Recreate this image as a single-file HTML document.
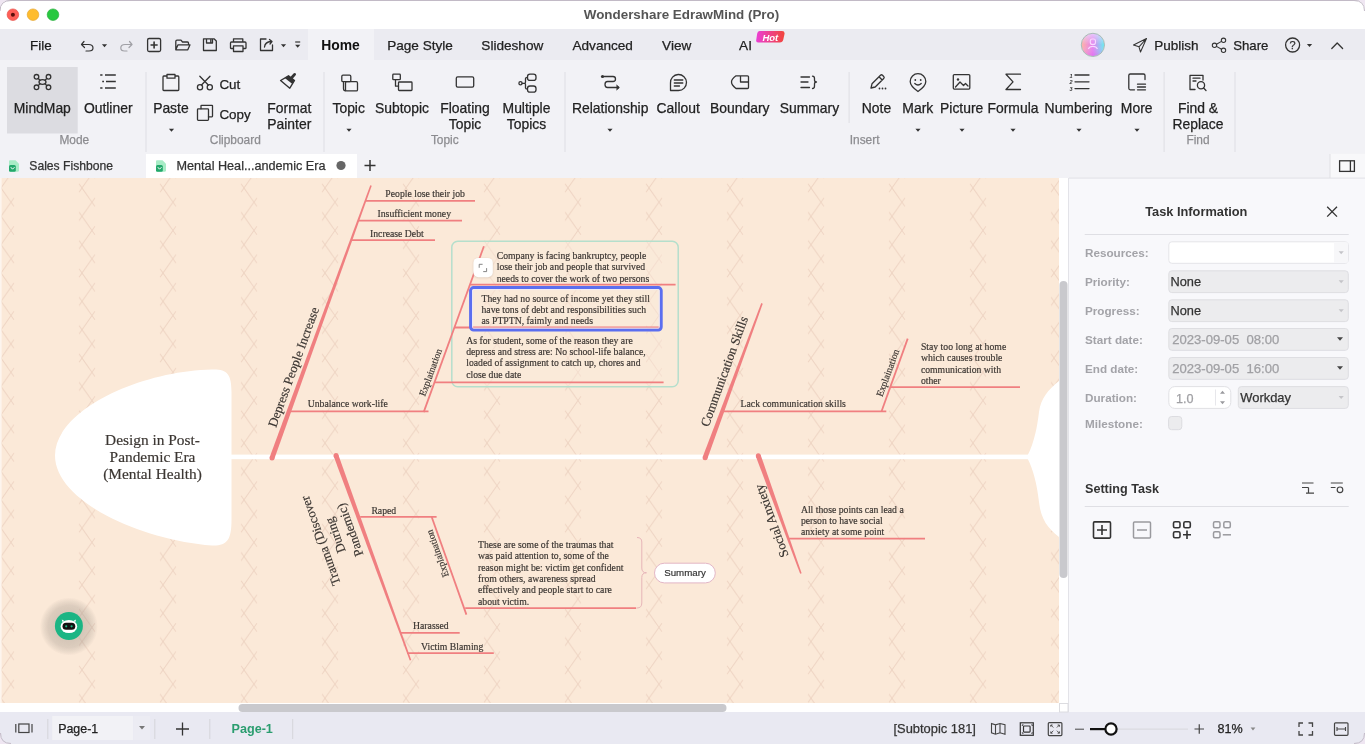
<!DOCTYPE html>
<html><head><meta charset="utf-8">
<style>
html,body{margin:0;padding:0;width:1365px;height:744px;overflow:hidden;background:#fff;}
body{position:relative;font-family:"Liberation Sans",sans-serif;}
.abs{position:absolute;}
svg{position:absolute;left:0;top:0;will-change:transform;}
</style></head><body>

<div class="abs" style="left:0;top:0;width:1365px;height:29px;background:#fff;"></div>
<div class="abs" style="left:0;top:0;width:1365px;height:1px;background:#cfcad3;"></div>
<div class="abs" style="left:0;top:29px;width:1365px;height:31px;background:#ebebf1;"></div>
<div class="abs" style="left:308px;top:29px;width:66px;height:31px;background:#f2f2f6;"></div>
<div class="abs" style="left:0;top:60px;width:1365px;height:93px;background:#f2f2f6;"></div>
<div class="abs" style="left:0;top:153px;width:1365px;height:25px;background:#f2f2f6;"></div>
<div class="abs" style="left:146px;top:154px;width:211px;height:24px;background:#fff;"></div>
<div class="abs" style="left:0;top:178px;width:1059px;height:525px;background:#fbe9d8;"></div>
<div class="abs" style="left:0;top:703px;width:1069px;height:9px;background:#fff;"></div>
<div class="abs" style="left:1059px;top:178px;width:9px;height:525px;background:#fff;"></div>
<div class="abs" style="left:1068px;top:178px;width:1px;height:534px;background:#e3e3e8;"></div>
<div class="abs" style="left:1069px;top:178px;width:296px;height:534px;background:#f8f8fb;"></div>
<div class="abs" style="left:0;top:712px;width:1365px;height:32px;background:#e9e9f2;"></div>

<svg width="1365" height="744" viewBox="0 0 1365 744" style="clip-path:inset(178px 306px 41px 0px)">
<defs><pattern id="pat" patternUnits="userSpaceOnUse" x="-4" y="188" width="81" height="28.35">
<g stroke="#eed4c3" stroke-width="1" fill="none">
<line x1="2.1" y1="-4.1" x2="17.9" y2="18.3"/>
<line x1="17.9" y1="10.0" x2="2.1" y2="32.4"/>
<line x1="17.9" y1="-18.3" x2="2.1" y2="4.1"/>
<line x1="2.1" y1="24.2" x2="17.9" y2="46.6"/>
</g></pattern></defs>
<rect x="0" y="178" width="1059" height="525" fill="url(#pat)"/><rect x="0" y="178" width="1.6" height="525" fill="#fdf5ee"/>
<rect x="451.8" y="241.2" width="226.4" height="145.5" rx="6" fill="#faebdc" fill-opacity="0.4" stroke="#b5dfcc" stroke-width="1.5"/>
<rect x="231" y="454.6" width="798" height="4.6" fill="#fff"/>
<path d="M231.5,392 C231.5,374 227,369 212,369.5 C140,371 55,410 55,455.5 C55,501 140,540 212,545.5 C227,546 231.5,540 231.5,520 Z" fill="#fff"/>
<text x="152.5" y="444.9" font-family="Liberation Serif" font-size="15.39" fill="#3b3632" stroke="#3b3632" stroke-width="0.18" text-anchor="middle" >Design in Post-</text><text x="152.5" y="461.95" font-family="Liberation Serif" font-size="15.39" fill="#3b3632" stroke="#3b3632" stroke-width="0.18" text-anchor="middle" >Pandemic Era</text><text x="152.5" y="479.0" font-family="Liberation Serif" font-size="15.39" fill="#3b3632" stroke="#3b3632" stroke-width="0.18" text-anchor="middle" >(Mental Health)</text>
<path d="M1027.8,455 C1033,445 1037,430 1039,412 C1041,398 1048,390 1059,381 L1059,703 L1059,537 C1048,528 1041,520 1039,502 C1037,484 1033,469 1027.8,459 Z" fill="#fff"/>
<path d="M274.35,458.85 L371.75,185.77 L370.25,185.23 L269.65,457.15 Z" fill="#f07f80"/><circle cx="272" cy="458" r="2.5" fill="#f07f80"/>
<g transform="translate(293.4,367) rotate(-70)"><text x="0" y="4.41" font-family="Liberation Serif" font-size="12.96" fill="#3b3632" stroke="#3b3632" stroke-width="0.18" text-anchor="middle">Depress People Increase</text></g>
<line x1="365.44076" y1="200.8" x2="475" y2="200.8" stroke="#f07f80" stroke-width="1.8"/>
<text x="385.3" y="197.4" font-family="Liberation Serif" font-size="9.72" fill="#3b3632" stroke="#3b3632" stroke-width="0.18" text-anchor="start" >People lose their job</text>
<line x1="358.21109" y1="220.7" x2="462" y2="220.7" stroke="#f07f80" stroke-width="1.8"/>
<text x="377.5" y="217.29999999999998" font-family="Liberation Serif" font-size="9.72" fill="#3b3632" stroke="#3b3632" stroke-width="0.18" text-anchor="start" >Insufficient money</text>
<line x1="351.12674000000004" y1="240.2" x2="435" y2="240.2" stroke="#f07f80" stroke-width="1.8"/>
<text x="370" y="236.79999999999998" font-family="Liberation Serif" font-size="9.72" fill="#3b3632" stroke="#3b3632" stroke-width="0.18" text-anchor="start" >Increase Debt</text>
<line x1="289" y1="411.3" x2="428.5" y2="411.3" stroke="#f07f80" stroke-width="1.8"/>
<text x="307.7" y="406.8" font-family="Liberation Serif" font-size="9.72" fill="#3b3632" stroke="#3b3632" stroke-width="0.18" text-anchor="start" >Unbalance work-life</text>
<line x1="423.7" y1="412.1" x2="483.9" y2="246.2" stroke="#f07f80" stroke-width="1.8"/>
<g transform="translate(430.5,372.4) rotate(-70)"><text x="0" y="3.30" font-family="Liberation Serif" font-size="9.72" fill="#3b3632" stroke="#3b3632" stroke-width="0.18" text-anchor="middle">Explaination</text></g>
<line x1="469.93346" y1="284.7" x2="675.6" y2="284.7" stroke="#f07f80" stroke-width="1.8"/>
<line x1="454.40134" y1="327.5" x2="662" y2="327.5" stroke="#f07f80" stroke-width="1.8"/>
<line x1="434.51442" y1="382.3" x2="663.6" y2="382.3" stroke="#f07f80" stroke-width="1.8"/>
<text x="496.7" y="259.0" font-family="Liberation Serif" font-size="9.72" fill="#3b3632" stroke="#3b3632" stroke-width="0.18" text-anchor="start" >Company is facing bankruptcy, people</text><text x="496.7" y="270.42" font-family="Liberation Serif" font-size="9.72" fill="#3b3632" stroke="#3b3632" stroke-width="0.18" text-anchor="start" >lose their job and people that survived</text><text x="496.7" y="281.84" font-family="Liberation Serif" font-size="9.72" fill="#3b3632" stroke="#3b3632" stroke-width="0.18" text-anchor="start" >needs to cover the work of two persons</text>
<text x="481.5" y="301.6" font-family="Liberation Serif" font-size="9.72" fill="#3b3632" stroke="#3b3632" stroke-width="0.18" text-anchor="start" >They had no source of income yet they still</text><text x="481.5" y="313.02000000000004" font-family="Liberation Serif" font-size="9.72" fill="#3b3632" stroke="#3b3632" stroke-width="0.18" text-anchor="start" >have tons of debt and responsibilities such</text><text x="481.5" y="324.44" font-family="Liberation Serif" font-size="9.72" fill="#3b3632" stroke="#3b3632" stroke-width="0.18" text-anchor="start" >as PTPTN, faimly and needs</text>
<text x="466.2" y="343.5" font-family="Liberation Serif" font-size="9.72" fill="#3b3632" stroke="#3b3632" stroke-width="0.18" text-anchor="start" >As for student, some of the reason they are</text><text x="466.2" y="354.92" font-family="Liberation Serif" font-size="9.72" fill="#3b3632" stroke="#3b3632" stroke-width="0.18" text-anchor="start" >depress and stress are: No school-life balance,</text><text x="466.2" y="366.34" font-family="Liberation Serif" font-size="9.72" fill="#3b3632" stroke="#3b3632" stroke-width="0.18" text-anchor="start" >loaded of assignment to catch up, chores and</text><text x="466.2" y="377.76" font-family="Liberation Serif" font-size="9.72" fill="#3b3632" stroke="#3b3632" stroke-width="0.18" text-anchor="start" >close due date</text>
<rect x="470.6" y="287.6" width="190.6" height="42.5" rx="3" fill="none" stroke="#5b6ef0" stroke-width="3"/><rect x="472.6" y="289.6" width="186.6" height="38.5" rx="1" fill="none" stroke="#eeeaf8" stroke-width="0.9"/>
<defs><filter id="bs" x="-50%" y="-50%" width="200%" height="200%"><feGaussianBlur stdDeviation="0.8"/></filter></defs><rect x="473.4" y="258.4" width="19.4" height="19.4" rx="5" fill="#b0a090" opacity="0.45" filter="url(#bs)"/><rect x="473.4" y="257.9" width="19.4" height="19.4" rx="5" fill="#fff"/>
<path d="M479.2,267.8 V264.3 H482.6 M486.6,268.1 V271.6 H483.2" stroke="#777" stroke-width="0.9" fill="none"/>
<path d="M707.45,458.56 L762.75,303.68 L761.25,303.12 L702.75,456.84 Z" fill="#f07f80"/><circle cx="705.1" cy="457.7" r="2.5" fill="#f07f80"/>
<g transform="translate(724.2,371.4) rotate(-70)"><text x="0" y="4.41" font-family="Liberation Serif" font-size="12.96" fill="#3b3632" stroke="#3b3632" stroke-width="0.18" text-anchor="middle">Communication Skills</text></g>
<line x1="722.9" y1="411.4" x2="886.3" y2="411.4" stroke="#f07f80" stroke-width="1.8"/>
<text x="740.6" y="406.6" font-family="Liberation Serif" font-size="9.72" fill="#3b3632" stroke="#3b3632" stroke-width="0.18" text-anchor="start" >Lack communication skills</text>
<line x1="881.4" y1="411.8" x2="907.7" y2="338.6" stroke="#f07f80" stroke-width="1.8"/>
<g transform="translate(887.7,372.9) rotate(-70)"><text x="0" y="3.30" font-family="Liberation Serif" font-size="9.72" fill="#3b3632" stroke="#3b3632" stroke-width="0.18" text-anchor="middle">Explaination</text></g>
<line x1="890" y1="387.1" x2="1020" y2="387.1" stroke="#f07f80" stroke-width="1.8"/>
<text x="920.9" y="350.0" font-family="Liberation Serif" font-size="9.72" fill="#3b3632" stroke="#3b3632" stroke-width="0.18" text-anchor="start" >Stay too long at home</text><text x="920.9" y="361.42" font-family="Liberation Serif" font-size="9.72" fill="#3b3632" stroke="#3b3632" stroke-width="0.18" text-anchor="start" >which causes trouble</text><text x="920.9" y="372.84" font-family="Liberation Serif" font-size="9.72" fill="#3b3632" stroke="#3b3632" stroke-width="0.18" text-anchor="start" >communication with</text><text x="920.9" y="384.26" font-family="Liberation Serif" font-size="9.72" fill="#3b3632" stroke="#3b3632" stroke-width="0.18" text-anchor="start" >other</text>
<path d="M333.65,456.35 L409.75,660.57 L411.25,660.03 L338.35,454.65 Z" fill="#f07f80"/><circle cx="336" cy="455.5" r="2.5" fill="#f07f80"/>
<g transform="translate(335.2,535.3) rotate(-110)"><text x="0" y="-11.29" font-family="Liberation Serif" font-size="12.96" fill="#3b3632" stroke="#3b3632" stroke-width="0.18" text-anchor="middle">Trauma (Discover</text><text x="0" y="4.41" font-family="Liberation Serif" font-size="12.96" fill="#3b3632" stroke="#3b3632" stroke-width="0.18" text-anchor="middle">During</text><text x="0" y="20.11" font-family="Liberation Serif" font-size="12.96" fill="#3b3632" stroke="#3b3632" stroke-width="0.18" text-anchor="middle">Pandemic)</text></g>
<line x1="360.2" y1="516.8" x2="436.6" y2="516.8" stroke="#f07f80" stroke-width="1.8"/>
<text x="371.4" y="513.7" font-family="Liberation Serif" font-size="9.72" fill="#3b3632" stroke="#3b3632" stroke-width="0.18" text-anchor="start" >Raped</text>
<line x1="431.7" y1="517" x2="466.4" y2="614.6" stroke="#f07f80" stroke-width="1.8"/>
<g transform="translate(437.4,553.6) rotate(-110)"><text x="0" y="3.30" font-family="Liberation Serif" font-size="9.72" fill="#3b3632" stroke="#3b3632" stroke-width="0.18" text-anchor="middle">Explaination</text></g>
<line x1="465.2" y1="608.1" x2="636.2" y2="608.1" stroke="#f07f80" stroke-width="1.8"/>
<text x="478" y="547.7" font-family="Liberation Serif" font-size="9.72" fill="#3b3632" stroke="#3b3632" stroke-width="0.18" text-anchor="start" >These are some of the traumas that</text><text x="478" y="559.12" font-family="Liberation Serif" font-size="9.72" fill="#3b3632" stroke="#3b3632" stroke-width="0.18" text-anchor="start" >was paid attention to, some of the</text><text x="478" y="570.5400000000001" font-family="Liberation Serif" font-size="9.72" fill="#3b3632" stroke="#3b3632" stroke-width="0.18" text-anchor="start" >reason might be: victim get confident</text><text x="478" y="581.96" font-family="Liberation Serif" font-size="9.72" fill="#3b3632" stroke="#3b3632" stroke-width="0.18" text-anchor="start" >from others, awareness spread</text><text x="478" y="593.38" font-family="Liberation Serif" font-size="9.72" fill="#3b3632" stroke="#3b3632" stroke-width="0.18" text-anchor="start" >effectively and people start to care</text><text x="478" y="604.8000000000001" font-family="Liberation Serif" font-size="9.72" fill="#3b3632" stroke="#3b3632" stroke-width="0.18" text-anchor="start" >about victim.</text>
<path d="M637,537.5 Q641.8,537.5 641.8,542 L641.8,568 Q641.8,572.8 646.5,572.8 Q641.8,572.8 641.8,577.5 L641.8,603 Q641.8,608 637,608" fill="none" stroke="#e6b4b8" stroke-width="1"/>
<rect x="654.5" y="563.2" width="60.8" height="19.7" rx="9.8" fill="#fff" stroke="#e2b6c6" stroke-width="1"/>
<text x="685" y="575.7" font-family="Liberation Sans" font-size="9.72" fill="#333" stroke="#333" stroke-width="0.18" text-anchor="middle" >Summary</text>
<line x1="400.6" y1="632.8" x2="459.7" y2="632.8" stroke="#f07f80" stroke-width="1.8"/>
<text x="413" y="629.3" font-family="Liberation Serif" font-size="9.72" fill="#3b3632" stroke="#3b3632" stroke-width="0.18" text-anchor="start" >Harassed</text>
<line x1="407" y1="653.2" x2="493.8" y2="653.2" stroke="#f07f80" stroke-width="1.8"/>
<text x="421" y="649.7" font-family="Liberation Serif" font-size="9.72" fill="#3b3632" stroke="#3b3632" stroke-width="0.18" text-anchor="start" >Victim Blaming</text>
<path d="M755.95,456.65 L800.15,573.87 L801.65,573.33 L760.65,454.95 Z" fill="#f07f80"/><circle cx="758.3" cy="455.8" r="2.5" fill="#f07f80"/>
<g transform="translate(771.5,520.9) rotate(-110)"><text x="0" y="4.41" font-family="Liberation Serif" font-size="12.96" fill="#3b3632" stroke="#3b3632" stroke-width="0.18" text-anchor="middle">Social Anxiety</text></g>
<line x1="788.4" y1="538.6" x2="925" y2="538.6" stroke="#f07f80" stroke-width="1.8"/>
<text x="800.9" y="512.6" font-family="Liberation Serif" font-size="9.72" fill="#3b3632" stroke="#3b3632" stroke-width="0.18" text-anchor="start" >All those points can lead a</text><text x="800.9" y="524.02" font-family="Liberation Serif" font-size="9.72" fill="#3b3632" stroke="#3b3632" stroke-width="0.18" text-anchor="start" >person to have social</text><text x="800.9" y="535.44" font-family="Liberation Serif" font-size="9.72" fill="#3b3632" stroke="#3b3632" stroke-width="0.18" text-anchor="start" >anxiety at some point</text>
<defs><radialGradient id="sh"><stop offset="0.4" stop-color="#948a80" stop-opacity="0.38"/><stop offset="0.72" stop-color="#948a80" stop-opacity="0.3"/><stop offset="0.9" stop-color="#948a80" stop-opacity="0.12"/><stop offset="1" stop-color="#948a80" stop-opacity="0"/></radialGradient></defs>
<circle cx="68.9" cy="626.5" r="29" fill="url(#sh)"/>
<circle cx="68.9" cy="626" r="14" fill="#1bb584"/>
<path d="M62.5,622 L61.8,619.5 L64.5,621 Z M75.3,622 L76,619.5 L73.3,621 Z" fill="#fff"/><ellipse cx="68.9" cy="626.5" rx="8.3" ry="6.6" fill="#fff"/>
<rect x="62.5" y="622.8" width="12.8" height="7" rx="3.5" fill="#111"/>
<circle cx="66.2" cy="626.3" r="1.1" fill="#1bb584"/><circle cx="71.6" cy="626.3" r="1.1" fill="#1bb584"/>
</svg>
<svg width="1365" height="744" viewBox="0 0 1365 744">
<rect x="1059.5" y="281" width="8" height="297" rx="4" fill="#c9c9cd"/>
<rect x="238.5" y="704" width="488" height="8" rx="4" fill="#c9c9cd"/>
<rect x="1059.5" y="703.5" width="8.5" height="8.5" fill="#fff" stroke="#dcdce0" stroke-width="1"/>
<path d="M0,0 H11 Q0,0 0,11 Z M1365,0 H1354 Q1365,0 1365,11 Z M0,744 V733 Q0,744 11,744 Z M1365,744 V733 Q1365,744 1354,744 Z" fill="#efe6f2"/>
<path d="M0,11 Q0,0.5 11,0.5 H1354 Q1364.5,0.5 1364.5,11 M0.5,733 Q0.5,743.5 11,743.5 M1354,743.5 Q1364.5,743.5 1364.5,733" fill="none" stroke="#c2bac6" stroke-width="1"/>
<circle cx="12.9" cy="14.7" r="5.8" fill="#fe5f57" stroke="#e2463f" stroke-width="0.6"/><circle cx="12.9" cy="14.7" r="2" fill="#5a0f0a"/>
<circle cx="33" cy="14.7" r="5.8" fill="#febc2e" stroke="#e0a028" stroke-width="0.6"/>
<circle cx="53" cy="14.7" r="5.8" fill="#28c840" stroke="#1fa834" stroke-width="0.6"/>
<text x="681.5" y="18.6" font-family="Liberation Sans" font-size="13.4" fill="#555" text-anchor="middle" font-weight="700" >Wondershare EdrawMind (Pro)</text>
<text x="30" y="49.8" font-family="Liberation Sans" font-size="13.4" fill="#1a1a1a" stroke="#1a1a1a" stroke-width="0.25" text-anchor="start" font-weight="400" >File</text>
<path d="M84,41.5 L81.5,44.5 L84.5,47.5 M81.8,44.5 H88.5 Q93,44.5 93,48 Q93,51 89,51 H86" fill="none" stroke="#333" stroke-width="1.2" stroke-linecap="round" stroke-linejoin="round"/>
<path d="M101.9,44.239999999999995 L107.1,44.239999999999995 L104.5,47.36 Z" fill="#333"/>
<path d="M129.5,41.5 L132,44.5 L129,47.5 M131.7,44.5 H125 Q120.8,44.5 120.8,48 Q120.8,51 124.5,51 H127" fill="none" stroke="#a0a0a6" stroke-width="1.2" stroke-linecap="round" stroke-linejoin="round"/>
<rect x="147.6" y="38.5" width="13" height="13" rx="1.5" fill="none" stroke="#333" stroke-width="1.3" stroke-linecap="round" stroke-linejoin="round"/><path d="M154.1,42 V48 M151.1,45 H157.1" fill="none" stroke="#333" stroke-width="1.6" stroke-linecap="round"/>
<path d="M175.8,49.8 V41.5 Q175.8,40.2 177,40.2 H181 L182.5,42 H187.5 Q188.5,42 188.5,43 V44.2 M175.8,49.8 L178,44.8 H190 L187.8,49.8 Z" fill="none" stroke="#333" stroke-width="1.3" stroke-linecap="round" stroke-linejoin="round"/>
<path d="M203.5,38.8 H214 L216.3,41 V50.5 H203.5 Z M206.5,38.8 V43 H212.5 V38.8 M210.8,40 V42" fill="none" stroke="#333" stroke-width="1.3" stroke-linecap="round" stroke-linejoin="round"/>
<path d="M233.5,42 V38.8 H242.8 V42 M233,48.5 H231 Q230.5,48.5 230.5,48 V43 Q230.5,42 231.5,42 H245 Q246,42 246,43 V48 Q246,48.5 245.5,48.5 H243.5 M233.5,45.8 H243 V51.5 H233.5 Z" fill="none" stroke="#333" stroke-width="1.3" stroke-linecap="round" stroke-linejoin="round"/>
<path d="M266,39 H260.5 V50.5 H272.5 V45 M264.5,47 Q265,42 271,41.5 M269.5,39.5 L272,41.5 L270,44" fill="none" stroke="#333" stroke-width="1.3" stroke-linecap="round" stroke-linejoin="round"/>
<path d="M280.9,44.239999999999995 L286.1,44.239999999999995 L283.5,47.36 Z" fill="#333"/>
<path d="M295.2,42 H300.2" stroke="#333" stroke-width="1.2"/><path d="M295.09999999999997,44.64 L300.3,44.64 L297.7,47.760000000000005 Z" fill="#333"/>
<text x="340.5" y="49.8" font-family="Liberation Sans" font-size="13.9" fill="#111" text-anchor="middle" font-weight="700" >Home</text>
<text x="420" y="49.8" font-family="Liberation Sans" font-size="13.6" fill="#222" stroke="#222" stroke-width="0.25" text-anchor="middle" font-weight="400" >Page Style</text>
<text x="512.3" y="49.8" font-family="Liberation Sans" font-size="13.6" fill="#222" stroke="#222" stroke-width="0.25" text-anchor="middle" font-weight="400" >Slideshow</text>
<text x="602.7" y="49.8" font-family="Liberation Sans" font-size="13.6" fill="#222" stroke="#222" stroke-width="0.25" text-anchor="middle" font-weight="400" >Advanced</text>
<text x="676.7" y="49.8" font-family="Liberation Sans" font-size="13.6" fill="#222" stroke="#222" stroke-width="0.25" text-anchor="middle" font-weight="400" >View</text>
<text x="745.5" y="49.8" font-family="Liberation Sans" font-size="13.6" fill="#222" stroke="#222" stroke-width="0.25" text-anchor="middle" font-weight="400" >AI</text>
<defs><linearGradient id="hot" x1="0" x2="1"><stop offset="0" stop-color="#ea3fd6"/><stop offset="1" stop-color="#f2453a"/></linearGradient></defs>
<path d="M759.5,31 H782 Q785,31 784.5,34 L783.3,39.5 Q782.7,42.4 779.7,42.4 H758 Q755.8,42.4 756.2,40 L757.2,33.5 Q757.6,31 759.5,31 Z" fill="url(#hot)"/>
<text x="770.3" y="40.5" font-family="Liberation Sans" font-size="9.5" fill="#fff" text-anchor="middle" font-weight="700" font-style="italic">Hot</text>
<defs><linearGradient id="av" x1="0" y1="0" x2="1" y2="0"><stop offset="0" stop-color="#ffb2a6"/><stop offset="0.5" stop-color="#e47ef0"/><stop offset="1" stop-color="#66eef2"/></linearGradient><linearGradient id="av2" x1="0" y1="0" x2="0" y2="1"><stop offset="0" stop-color="#e8dcff" stop-opacity="0.75"/><stop offset="0.5" stop-color="#e8dcff" stop-opacity="0"/><stop offset="1" stop-color="#e050f0" stop-opacity="0.35"/></linearGradient></defs>
<circle cx="1092.9" cy="44.9" r="11.2" fill="url(#av)"/><circle cx="1092.9" cy="44.9" r="11.2" fill="url(#av2)"/><circle cx="1092.9" cy="44.9" r="11.6" fill="none" stroke="#9fb5b0" stroke-width="0.9"/>
<rect x="1090.3" y="39" width="5.2" height="5.4" rx="2" fill="none" stroke="#f8d8ff" stroke-width="1.1"/><path d="M1088.3,49 Q1089.5,46.4 1092.9,46.4 Q1096.3,46.4 1097.5,49" fill="none" stroke="#f8d8ff" stroke-width="1.1"/>
<path d="M1146.5,38.5 L1133.5,45 L1139,46.8 L1140.5,52 Z M1139,46.8 L1146.5,38.5" fill="none" stroke="#333" stroke-width="1.05" stroke-linejoin="round"/>
<text x="1154.3" y="50.3" font-family="Liberation Sans" font-size="13.5" fill="#222" stroke="#222" stroke-width="0.25" text-anchor="start" font-weight="400" >Publish</text>
<g fill="none" stroke="#333" stroke-width="1.05"><circle cx="1223.5" cy="40.3" r="2.2"/><circle cx="1214.5" cy="45.3" r="2.2"/><circle cx="1223.5" cy="50.3" r="2.2"/><path d="M1216.5,44.2 L1221.5,41.4 M1216.5,46.4 L1221.5,49.2"/></g>
<text x="1233.2" y="50.3" font-family="Liberation Sans" font-size="13.2" fill="#222" stroke="#222" stroke-width="0.25" text-anchor="start" font-weight="400" >Share</text>
<circle cx="1292.6" cy="45" r="7" fill="none" stroke="#333" stroke-width="1.3" stroke-linecap="round" stroke-linejoin="round"/>
<text x="1292.6" y="49.2" font-family="Liberation Sans" font-size="11" fill="#333" stroke="#333" stroke-width="0.25" text-anchor="middle" font-weight="400" >?</text>
<path d="M1306.9,43.94 L1312.1,43.94 L1309.5,47.06 Z" fill="#333"/>
<path d="M1331.8,48.5 L1337.2,43 L1342.6,48.5" fill="none" stroke="#333" stroke-width="1.3" stroke-linecap="round" stroke-linejoin="round"/>
<rect x="7" y="67" width="70.7" height="66.5" fill="#dcdce1"/>
<g fill="none" stroke="#333" stroke-width="1.3" stroke-linecap="round" stroke-linejoin="round"><ellipse cx="42.5" cy="82" rx="3.5" ry="2.3"/><circle cx="36.5" cy="76.8" r="2.3"/><circle cx="48.5" cy="76.8" r="2.3"/><circle cx="36.5" cy="87.3" r="2.3"/><circle cx="48.5" cy="87.3" r="2.3"/><path d="M38.2,78.5 L40,80.2 M46.8,78.5 L45,80.2 M38.2,85.6 L40,83.8 M46.8,85.6 L45,83.8"/></g>
<text x="42.3" y="113" font-family="Liberation Sans" font-size="13.9" fill="#222" stroke="#222" stroke-width="0.25" text-anchor="middle" font-weight="400" >MindMap</text>
<g stroke="#333" stroke-width="1.3"><path d="M100.2,75 H102.5 M105,75 H115.8 M102.2,81.5 H104 M106,81.5 H115.8 M100.2,88 H102.5 M105,88 H115.8"/></g>
<text x="108.2" y="113" font-family="Liberation Sans" font-size="13.9" fill="#222" stroke="#222" stroke-width="0.25" text-anchor="middle" font-weight="400" >Outliner</text>
<text x="74.3" y="143.6" font-family="Liberation Sans" font-size="11.9" fill="#8c8c90" stroke="#8c8c90" stroke-width="0.25" text-anchor="middle" font-weight="400" >Mode</text>
<rect x="145.5" y="72" width="1" height="80" fill="#dedee3"/>
<path d="M166.5,76 H163.8 Q163,76 163,77 V89.8 Q163,90.5 163.8,90.5 H178 Q178.8,90.5 178.8,89.8 V77 Q178.8,76 178,76 H175.5 M167,74.5 H175 V78.2 H167 Z" fill="none" stroke="#333" stroke-width="1.3" stroke-linecap="round" stroke-linejoin="round"/>
<text x="170.9" y="113" font-family="Liberation Sans" font-size="13.9" fill="#222" stroke="#222" stroke-width="0.25" text-anchor="middle" font-weight="400" >Paste</text>
<path d="M168.9,128.74 L174.1,128.74 L171.5,131.86 Z" fill="#333"/>
<circle cx="200" cy="87.2" r="2.6" fill="none" stroke="#333" stroke-width="1.3" stroke-linecap="round" stroke-linejoin="round"/><circle cx="209.8" cy="87.2" r="2.6" fill="none" stroke="#333" stroke-width="1.3" stroke-linecap="round" stroke-linejoin="round"/><path d="M201.5,85 L210,76.2 M208.3,85 L199.8,76.2" fill="none" stroke="#333" stroke-width="1.3" stroke-linecap="round" stroke-linejoin="round"/>
<text x="219.4" y="88.6" font-family="Liberation Sans" font-size="13.4" fill="#222" stroke="#222" stroke-width="0.25" text-anchor="start" font-weight="400" >Cut</text>
<rect x="197.5" y="108.8" width="11" height="11.5" rx="0.8" fill="none" stroke="#333" stroke-width="1.3" stroke-linecap="round" stroke-linejoin="round"/><path d="M201,108.8 V105.8 Q201,105.3 201.5,105.3 H212 Q212.5,105.3 212.5,105.8 V116 Q212.5,116.8 212,116.8 H208.5" fill="none" stroke="#333" stroke-width="1.3" stroke-linecap="round" stroke-linejoin="round"/>
<text x="219.4" y="118.6" font-family="Liberation Sans" font-size="13.4" fill="#222" stroke="#222" stroke-width="0.25" text-anchor="start" font-weight="400" >Copy</text>
<path d="M280.6,80.5 L288.5,75.8 L294.5,80.5 L289.8,88.2 Z" fill="none" stroke="#333" stroke-width="1.4" stroke-linejoin="round"/><path d="M284.8,78 L288.5,75.8 L294.5,80.5 L292.4,84 Z" fill="#333"/><path d="M291.2,78.2 L294.6,74.4" stroke="#333" stroke-width="2.8" stroke-linecap="round"/>
<text x="289.3" y="113" font-family="Liberation Sans" font-size="13.9" fill="#222" stroke="#222" stroke-width="0.25" text-anchor="middle" font-weight="400" >Format</text>
<text x="289.3" y="128.9" font-family="Liberation Sans" font-size="13.9" fill="#222" stroke="#222" stroke-width="0.25" text-anchor="middle" font-weight="400" >Painter</text>
<text x="235.3" y="143.6" font-family="Liberation Sans" font-size="11.9" fill="#8c8c90" stroke="#8c8c90" stroke-width="0.25" text-anchor="middle" font-weight="400" >Clipboard</text>
<rect x="323.5" y="72" width="1" height="80" fill="#dedee3"/>
<rect x="341.8" y="75.2" width="9" height="6.5" rx="1.2" fill="none" stroke="#333" stroke-width="1.3" stroke-linecap="round" stroke-linejoin="round"/><path d="M343.5,81.7 V88.5 Q343.5,90.8 345.5,90.8" fill="none" stroke="#333" stroke-width="1.3" stroke-linecap="round" stroke-linejoin="round"/><rect x="345.5" y="81.7" width="12" height="9.2" rx="1.2" fill="none" stroke="#333" stroke-width="1.3" stroke-linecap="round" stroke-linejoin="round"/>
<text x="348.7" y="113" font-family="Liberation Sans" font-size="13.9" fill="#222" stroke="#222" stroke-width="0.25" text-anchor="middle" font-weight="400" >Topic</text>
<path d="M346.4,128.74 L351.6,128.74 L349,131.86 Z" fill="#333"/>
<rect x="392.8" y="74.2" width="7.5" height="5.5" rx="0.8" fill="none" stroke="#333" stroke-width="1.3" stroke-linecap="round" stroke-linejoin="round"/><path d="M395.5,79.7 V86.2 H398.5" fill="none" stroke="#333" stroke-width="1.3" stroke-linecap="round" stroke-linejoin="round"/><rect x="398.5" y="82" width="13.5" height="8.5" rx="0.8" fill="none" stroke="#333" stroke-width="1.3" stroke-linecap="round" stroke-linejoin="round"/>
<text x="402" y="113" font-family="Liberation Sans" font-size="13.9" fill="#222" stroke="#222" stroke-width="0.25" text-anchor="middle" font-weight="400" >Subtopic</text>
<rect x="456.3" y="76.8" width="17.4" height="10.3" rx="1.4" fill="none" stroke="#333" stroke-width="1.3" stroke-linecap="round" stroke-linejoin="round"/>
<text x="465" y="113" font-family="Liberation Sans" font-size="13.9" fill="#222" stroke="#222" stroke-width="0.25" text-anchor="middle" font-weight="400" >Floating</text>
<text x="465" y="128.9" font-family="Liberation Sans" font-size="13.9" fill="#222" stroke="#222" stroke-width="0.25" text-anchor="middle" font-weight="400" >Topic</text>
<rect x="527.5" y="74.2" width="8.5" height="6.2" rx="2.5" fill="none" stroke="#333" stroke-width="1.3" stroke-linecap="round" stroke-linejoin="round"/><rect x="527.5" y="86" width="8.5" height="6.2" rx="2.5" fill="none" stroke="#333" stroke-width="1.3" stroke-linecap="round" stroke-linejoin="round"/><circle cx="520.5" cy="83.3" r="1.6" fill="none" stroke="#333" stroke-width="1.3" stroke-linecap="round" stroke-linejoin="round"/><path d="M522.1,83.3 H524.5 Q525.5,83.3 525.5,82 V78.5 Q525.5,77.3 527.5,77.3 M524.5,83.3 Q525.5,83.3 525.5,84.5 V88 Q525.5,89.1 527.5,89.1" fill="none" stroke="#333" stroke-width="1.3" stroke-linecap="round" stroke-linejoin="round"/>
<text x="526.5" y="113" font-family="Liberation Sans" font-size="13.9" fill="#222" stroke="#222" stroke-width="0.25" text-anchor="middle" font-weight="400" >Multiple</text>
<text x="526.5" y="128.9" font-family="Liberation Sans" font-size="13.9" fill="#222" stroke="#222" stroke-width="0.25" text-anchor="middle" font-weight="400" >Topics</text>
<text x="444.8" y="143.6" font-family="Liberation Sans" font-size="11.9" fill="#8c8c90" stroke="#8c8c90" stroke-width="0.25" text-anchor="middle" font-weight="400" >Topic</text>
<rect x="564.5" y="72" width="1" height="80" fill="#dedee3"/>
<circle cx="602.5" cy="76.5" r="1.6" fill="#333"/><path d="M603.5,76.5 H613 Q615.5,76.5 615.5,79 Q615.5,81.5 613,81.5 H607.5 Q605,81.5 605,84.5 Q605,87.5 607.5,87.5 H618.5" fill="none" stroke="#333" stroke-width="1.3" stroke-linecap="round" stroke-linejoin="round"/><path d="M616.5,85 L619.3,87.5 L616.5,90" fill="#333" stroke="#333" stroke-width="1"/>
<text x="610.2" y="113" font-family="Liberation Sans" font-size="13.9" fill="#222" stroke="#222" stroke-width="0.25" text-anchor="middle" font-weight="400" >Relationship</text>
<path d="M607.4,128.74 L612.6,128.74 L610,131.86 Z" fill="#333"/>
<path d="M670.5,90.5 V83 A8,8 0 1 1 678.5,90.5 Z" fill="none" stroke="#333" stroke-width="1.3" stroke-linecap="round" stroke-linejoin="round"/><path d="M674.3,80 H682.8 M674.3,83 H682.8 M674.3,86 H679.5" fill="none" stroke="#333" stroke-width="1.3" stroke-linecap="round" stroke-linejoin="round"/>
<text x="678.2" y="113" font-family="Liberation Sans" font-size="13.9" fill="#222" stroke="#222" stroke-width="0.25" text-anchor="middle" font-weight="400" >Callout</text>
<path d="M736,75.8 H747.5 Q748.5,75.8 748.5,76.8 V87.5 Q748.5,88.5 747.5,88.5 H736 Q731.5,85 731.5,82 Q731.5,79 736,75.8 Z M740.5,75.8 V82 H748.5" fill="none" stroke="#333" stroke-width="1.3" stroke-linecap="round" stroke-linejoin="round"/>
<text x="739.8" y="113" font-family="Liberation Sans" font-size="13.9" fill="#222" stroke="#222" stroke-width="0.25" text-anchor="middle" font-weight="400" >Boundary</text>
<path d="M801,77 H809.5 M801,82 H808 M801,87.5 H809.5 M812.5,76.2 Q814.5,76.2 814.5,78.5 V80 Q814.5,82 816.5,82 Q814.5,82 814.5,84 V86 Q814.5,88.5 812.5,88.5" fill="none" stroke="#333" stroke-width="1.3" stroke-linecap="round" stroke-linejoin="round"/>
<text x="809.4" y="113" font-family="Liberation Sans" font-size="13.9" fill="#222" stroke="#222" stroke-width="0.25" text-anchor="middle" font-weight="400" >Summary</text>
<rect x="848.6" y="72" width="1" height="51" fill="#dedee3"/>
<g transform="translate(0,-1)">
<path d="M871,89 L872,84.8 L880.5,76.3 Q881.5,75.3 882.5,76.3 L883.7,77.5 Q884.7,78.5 883.7,79.5 L875.2,88 Z M879,77.8 L882.2,81" fill="none" stroke="#333" stroke-width="1.3" stroke-linecap="round" stroke-linejoin="round"/><circle cx="879.5" cy="89.5" r="0.9" fill="#333"/><circle cx="882.5" cy="89.5" r="0.9" fill="#333"/><circle cx="885.5" cy="89.5" r="0.9" fill="#333"/>
</g>
<text x="876.5" y="113" font-family="Liberation Sans" font-size="13.9" fill="#222" stroke="#222" stroke-width="0.25" text-anchor="middle" font-weight="400" >Note</text>
<path d="M918,91.5 Q910.2,86 910.2,81.5 A7.8,7.8 0 1 1 925.8,81.5 Q925.8,86 918,91.5 Z" fill="none" stroke="#333" stroke-width="1.3" stroke-linecap="round" stroke-linejoin="round"/><circle cx="915.3" cy="80" r="0.9" fill="#333"/><circle cx="920.7" cy="80" r="0.9" fill="#333"/><path d="M914.8,83.5 Q918,86.5 921.2,83.5" fill="none" stroke="#333" stroke-width="1.3" stroke-linecap="round" stroke-linejoin="round"/>
<text x="917.8" y="113" font-family="Liberation Sans" font-size="13.9" fill="#222" stroke="#222" stroke-width="0.25" text-anchor="middle" font-weight="400" >Mark</text>
<path d="M915.4,128.74 L920.6,128.74 L918,131.86 Z" fill="#333"/>
<rect x="953.3" y="74.6" width="16.5" height="14.5" rx="1" fill="none" stroke="#333" stroke-width="1.3" stroke-linecap="round" stroke-linejoin="round"/><path d="M955.5,87 L960,82 L963.5,85.5 L965.5,83.5 L968,86" fill="none" stroke="#333" stroke-width="1.3" stroke-linecap="round" stroke-linejoin="round"/><circle cx="958" cy="79.5" r="1.2" fill="#333"/>
<text x="961.7" y="113" font-family="Liberation Sans" font-size="13.9" fill="#222" stroke="#222" stroke-width="0.25" text-anchor="middle" font-weight="400" >Picture</text>
<path d="M959.4,128.74 L964.6,128.74 L962,131.86 Z" fill="#333"/>
<path d="M1020.5,74.2 H1006 L1013,81.9 L1006,89.5 H1020.5" fill="none" stroke="#333" stroke-width="1.3" stroke-linecap="round" stroke-linejoin="round"/>
<text x="1013" y="113" font-family="Liberation Sans" font-size="13.9" fill="#222" stroke="#222" stroke-width="0.25" text-anchor="middle" font-weight="400" >Formula</text>
<path d="M1010.4,128.74 L1015.6,128.74 L1013,131.86 Z" fill="#333"/>
<path d="M1075,75 H1089 M1075,81.8 H1089 M1075,88.6 H1089" fill="none" stroke="#333" stroke-width="1.3" stroke-linecap="round" stroke-linejoin="round"/>
<text x="1071" y="77.5" font-family="Liberation Sans" font-size="5.5" fill="#333" text-anchor="middle" font-weight="700" font-style="italic">1</text>
<text x="1071" y="84.3" font-family="Liberation Sans" font-size="5.5" fill="#333" text-anchor="middle" font-weight="700" font-style="italic">2</text>
<text x="1071" y="91.1" font-family="Liberation Sans" font-size="5.5" fill="#333" text-anchor="middle" font-weight="700" font-style="italic">3</text>
<text x="1078.6" y="113" font-family="Liberation Sans" font-size="13.9" fill="#222" stroke="#222" stroke-width="0.25" text-anchor="middle" font-weight="400" >Numbering</text>
<path d="M1076.4,128.74 L1081.6,128.74 L1079,131.86 Z" fill="#333"/>
<path d="M1145,79.5 V75.5 Q1145,74 1143.5,74 H1130.3 Q1128.8,74 1128.8,75.5 V88.3 Q1128.8,89.8 1130.3,89.8 H1134.5" fill="none" stroke="#333" stroke-width="1.3" stroke-linecap="round" stroke-linejoin="round"/><path d="M1137.5,84.2 H1145.5 M1137.5,87 H1145.5 M1137.5,89.8 H1145.5" fill="none" stroke="#333" stroke-width="1.3" stroke-linecap="round" stroke-linejoin="round"/>
<text x="1136.7" y="113" font-family="Liberation Sans" font-size="13.9" fill="#222" stroke="#222" stroke-width="0.25" text-anchor="middle" font-weight="400" >More</text>
<path d="M1134.4,128.74 L1139.6,128.74 L1137,131.86 Z" fill="#333"/>
<text x="864.6" y="143.6" font-family="Liberation Sans" font-size="11.9" fill="#8c8c90" stroke="#8c8c90" stroke-width="0.25" text-anchor="middle" font-weight="400" >Insert</text>
<rect x="1163.6" y="72" width="1" height="80" fill="#dedee3"/>
<path d="M1203,80 V75.3 H1190 V89.5 H1195" fill="none" stroke="#333" stroke-width="1.3" stroke-linecap="round" stroke-linejoin="round"/><path d="M1193,78.2 H1200 M1193,81 H1196" fill="none" stroke="#333" stroke-width="1.3" stroke-linecap="round" stroke-linejoin="round"/><circle cx="1201" cy="85.3" r="3.6" fill="none" stroke="#333" stroke-width="1.3" stroke-linecap="round" stroke-linejoin="round"/><path d="M1203.6,88 L1206,90.5" fill="none" stroke="#333" stroke-width="1.3" stroke-linecap="round" stroke-linejoin="round"/>
<text x="1198" y="113" font-family="Liberation Sans" font-size="13.9" fill="#222" stroke="#222" stroke-width="0.25" text-anchor="middle" font-weight="400" >Find &amp;</text>
<text x="1198" y="128.9" font-family="Liberation Sans" font-size="13.9" fill="#222" stroke="#222" stroke-width="0.25" text-anchor="middle" font-weight="400" >Replace</text>
<text x="1198" y="143.6" font-family="Liberation Sans" font-size="11.9" fill="#8c8c90" stroke="#8c8c90" stroke-width="0.25" text-anchor="middle" font-weight="400" >Find</text>
<rect x="1234.5" y="72" width="1" height="80" fill="#dedee3"/>
<path d="M10,160.2 H15.5 L19,163.7 V170.2 Q19,171.7 17.5,171.7 H10 Q9,171.7 9,170.2 V161.2 Q9,160.2 10,160.2 Z" fill="#a8ecc6"/><rect x="9" y="165.0" width="6.8" height="6.8" rx="1.5" fill="#23a86b"/><path d="M10.8,167.2 L12.5,169.2 L14.5,167.2" stroke="#fff" stroke-width="1" fill="none"/>
<text x="29.3" y="170.2" font-family="Liberation Sans" font-size="12.15" fill="#333" stroke="#333" stroke-width="0.25" text-anchor="start" font-weight="400" >Sales Fishbone</text>
<path d="M157,160.2 H162.5 L166,163.7 V170.2 Q166,171.7 164.5,171.7 H157 Q156,171.7 156,170.2 V161.2 Q156,160.2 157,160.2 Z" fill="#a8ecc6"/><rect x="156" y="165.0" width="6.8" height="6.8" rx="1.5" fill="#23a86b"/><path d="M157.8,167.2 L159.5,169.2 L161.5,167.2" stroke="#fff" stroke-width="1" fill="none"/>
<text x="176.5" y="170.2" font-family="Liberation Sans" font-size="12.65" fill="#333" stroke="#333" stroke-width="0.25" text-anchor="start" font-weight="400" >Mental Heal...andemic Era</text>
<circle cx="341" cy="165.5" r="4.6" fill="#666"/>
<path d="M364.5,165.5 H375.5 M370,160 V171" stroke="#333" stroke-width="1.5"/>
<rect x="1330" y="153.8" width="35" height="24.2" fill="#f8f8fa"/><rect x="1329.5" y="154" width="1" height="24" fill="#e0e0e4"/><rect x="1069" y="177.6" width="296" height="1" fill="#e2e2e6"/>
<rect x="1339.6" y="160.8" width="14.8" height="10.6" fill="none" stroke="#333" stroke-width="1.3"/><path d="M1350.4,160.8 V171.4" stroke="#333" stroke-width="1.3"/>
</svg>
<svg width="1365" height="744" viewBox="0 0 1365 744">
<text x="1145.2" y="215.9" font-family="Liberation Sans" font-size="12.8" fill="#333" text-anchor="start" font-weight="700" >Task Information</text>
<path d="M1327.2,206.8 L1337,216.6 M1337,206.8 L1327.2,216.6" stroke="#333" stroke-width="1.3"/>
<rect x="1084.7" y="234" width="264" height="1" fill="#dfdfe4"/>
<text x="1085" y="257" font-family="Liberation Sans" font-size="11.7" fill="#a3a3a8" text-anchor="start" font-weight="700" >Resources:</text>
<text x="1085" y="285.8" font-family="Liberation Sans" font-size="11.7" fill="#a3a3a8" text-anchor="start" font-weight="700" >Priority:</text>
<text x="1085" y="314.8" font-family="Liberation Sans" font-size="11.7" fill="#a3a3a8" text-anchor="start" font-weight="700" >Progress:</text>
<text x="1085" y="343.5" font-family="Liberation Sans" font-size="11.7" fill="#a3a3a8" text-anchor="start" font-weight="700" >Start date:</text>
<text x="1085" y="372.5" font-family="Liberation Sans" font-size="11.7" fill="#a3a3a8" text-anchor="start" font-weight="700" >End date:</text>
<text x="1085" y="401.7" font-family="Liberation Sans" font-size="11.7" fill="#a3a3a8" text-anchor="start" font-weight="700" >Duration:</text>
<text x="1085" y="427.6" font-family="Liberation Sans" font-size="11.7" fill="#a3a3a8" text-anchor="start" font-weight="700" >Milestone:</text>
<rect x="1168.8" y="241.8" width="179.5" height="21.5" rx="3" fill="#fff" stroke="#e4e4e8" stroke-width="1"/>
<rect x="1334" y="242.3" width="13.8" height="20.5" fill="#f7f7f9"/>
<path d="M1338.6000000000001,251.24 L1343.8,251.24 L1341.2,254.36 Z" fill="#c4c4c8"/>
<rect x="1168.8" y="270.8" width="179.5" height="21.8" rx="3" fill="#ececee" stroke="#dedee2" stroke-width="1"/>
<text x="1170.5" y="285.8" font-family="Liberation Sans" font-size="12.8" fill="#333" stroke="#333" stroke-width="0.25" text-anchor="start" font-weight="400" >None</text>
<path d="M1338.6000000000001,280.24 L1343.8,280.24 L1341.2,283.36 Z" fill="#c4c4c8"/>
<rect x="1168.8" y="299.8" width="179.5" height="21.8" rx="3" fill="#ececee" stroke="#dedee2" stroke-width="1"/>
<text x="1170.5" y="314.8" font-family="Liberation Sans" font-size="12.8" fill="#333" stroke="#333" stroke-width="0.25" text-anchor="start" font-weight="400" >None</text>
<path d="M1338.6000000000001,309.24 L1343.8,309.24 L1341.2,312.36 Z" fill="#c4c4c8"/>
<rect x="1168.8" y="328.5" width="179.5" height="21.8" rx="3" fill="#ececee" stroke="#dedee2" stroke-width="1"/>
<text x="1172.2" y="344.2" font-family="Liberation Sans" font-size="13.1" fill="#a0a0a4" stroke="#a0a0a4" stroke-width="0.25" text-anchor="start" font-weight="400" >2023-09-05&#160;&#160;08:00</text>
<path d="M1337,337.2 L1343,337.2 L1340,340.8 Z" fill="#444"/>
<rect x="1168.8" y="357.5" width="179.5" height="21.8" rx="3" fill="#ececee" stroke="#dedee2" stroke-width="1"/>
<text x="1172.2" y="373.2" font-family="Liberation Sans" font-size="13.1" fill="#a0a0a4" stroke="#a0a0a4" stroke-width="0.25" text-anchor="start" font-weight="400" >2023-09-05&#160;&#160;16:00</text>
<path d="M1337,366.2 L1343,366.2 L1340,369.8 Z" fill="#444"/>
<rect x="1168.8" y="386.6" width="62" height="21.8" rx="6" fill="#fff" stroke="#e0e0e4" stroke-width="1"/>
<text x="1176" y="402.5" font-family="Liberation Sans" font-size="12.6" fill="#a0a0a4" stroke="#a0a0a4" stroke-width="0.25" text-anchor="start" font-weight="400" >1.0</text>
<rect x="1215.2" y="389.5" width="0.8" height="16" fill="#e2e2e6"/>
<path d="M1220,393.8 L1222.5,390.8 L1225,393.8 Z M1220,401.2 L1222.5,404.2 L1225,401.2 Z" fill="#9a9a9e"/>
<rect x="1238.3" y="386.6" width="110" height="21.8" rx="3" fill="#ececee" stroke="#dedee2" stroke-width="1"/>
<text x="1240.3" y="402" font-family="Liberation Sans" font-size="12.9" fill="#333" stroke="#333" stroke-width="0.25" text-anchor="start" font-weight="400" >Workday</text>
<path d="M1338.6000000000001,395.94 L1343.8,395.94 L1341.2,399.06 Z" fill="#c4c4c8"/>
<rect x="1168.6" y="416.5" width="13.2" height="13.2" rx="3" fill="#ececee" stroke="#dcdce0" stroke-width="1"/>
<text x="1085" y="492.7" font-family="Liberation Sans" font-size="12.6" fill="#333" text-anchor="start" font-weight="700" >Setting Task</text>
<path d="M1302,483 H1313.5 M1302,487.5 H1308.5 M1308.5,487.5 V493.2 M1306,493.2 H1314" stroke="#444" stroke-width="1.2" fill="none"/>
<path d="M1330.8,483 H1342.8 M1330.8,487.5 H1335.5" stroke="#444" stroke-width="1.2" fill="none"/><circle cx="1340" cy="489.8" r="2.8" stroke="#444" stroke-width="1.2" fill="none"/>
<rect x="1084.7" y="506" width="264" height="1" fill="#dfdfe4"/>
<rect x="1093.5" y="521.9" width="17" height="16.2" rx="1" fill="none" stroke="#333" stroke-width="1.6"/><path d="M1102,525 V535 M1097,530 H1107" stroke="#333" stroke-width="1.6"/>
<rect x="1133.5" y="521.9" width="17" height="16.2" rx="1" fill="none" stroke="#9a9a9e" stroke-width="1.5"/><path d="M1137,530 H1147" stroke="#9a9a9e" stroke-width="1.5"/>
<g fill="none" stroke="#333" stroke-width="1.6"><rect x="1173.5" y="521.8" width="6.5" height="6" rx="1.5"/><rect x="1183.8" y="521.8" width="6.5" height="6" rx="1.5"/><rect x="1173.5" y="531.8" width="6.5" height="6" rx="1.5"/><path d="M1187,530.5 V539 M1183,534.8 H1191"/></g>
<g fill="none" stroke="#9a9a9e" stroke-width="1.5"><rect x="1213.5" y="521.8" width="6.5" height="6" rx="1.5"/><rect x="1223.8" y="521.8" width="6.5" height="6" rx="1.5"/><rect x="1213.5" y="531.8" width="6.5" height="6" rx="1.5"/><path d="M1222.8,534.8 H1231"/></g>
<path d="M15.8,724 V732.5 M32,724 V732.5" stroke="#444" stroke-width="1.2"/><rect x="18.8" y="724" width="10.2" height="8.5" fill="none" stroke="#444" stroke-width="1.2"/>
<rect x="47.3" y="719" width="1" height="20" fill="#d5d5da"/>
<rect x="52.3" y="716" width="81" height="24" fill="#f2f2f6"/><rect x="133.3" y="716" width="17" height="24" fill="#ececf3"/>
<text x="58.2" y="733" font-family="Liberation Sans" font-size="12.4" fill="#222" stroke="#222" stroke-width="0.25" text-anchor="start" font-weight="400" >Page-1</text>
<path d="M139,726.0 L145,726.0 L142,729.5999999999999 Z" fill="#777"/>
<rect x="154.3" y="719" width="1" height="20" fill="#d5d5da"/>
<path d="M176,729 H189 M182.5,722.5 V735.5" stroke="#333" stroke-width="1.3"/>
<rect x="209.3" y="719" width="1" height="20" fill="#d5d5da"/>
<text x="252.2" y="733" font-family="Liberation Sans" font-size="12.6" fill="#2a9d6f" text-anchor="middle" font-weight="700" >Page-1</text>
<rect x="292.2" y="719" width="1" height="20" fill="#d5d5da"/>
<text x="934.7" y="733" font-family="Liberation Sans" font-size="12.9" fill="#333" stroke="#333" stroke-width="0.25" text-anchor="middle" font-weight="400" >[Subtopic 181]</text>
<path d="M991.5,723.5 L995.5,724.8 L1000,723.5 L1005,724.8 V734.2 L1000,732.8 L995.5,734.2 L991.5,732.8 Z M995.5,724.8 V734.2 M1000,723.5 V732.8" stroke="#444" stroke-width="1.1" fill="none"/>
<rect x="1020.3" y="722.8" width="13" height="12.5" fill="none" stroke="#333" stroke-width="1.2"/><rect x="1023.5" y="726" width="6.6" height="6.1" rx="0.8" fill="none" stroke="#333" stroke-width="1.2"/><path d="M1022.3,726 V724.8 H1023.5 M1031.3,724.8 H1032.3 V726 M1032.3,732.3 V733.3 H1031.3 M1023.5,733.3 H1022.3 V732.3" stroke="#333" stroke-width="0.9" fill="none"/>
<rect x="1048.3" y="722.6" width="13.6" height="13" rx="1" fill="none" stroke="#444" stroke-width="1.2"/><path d="M1050.8,725 L1053.3,727.5 M1050.8,725 V726.8 M1050.8,725 H1052.6 M1059.4,725 L1056.9,727.5 M1059.4,725 V726.8 M1059.4,725 H1057.6 M1050.8,733.2 L1053.3,730.7 M1050.8,733.2 V731.4 M1050.8,733.2 H1052.6 M1059.4,733.2 L1056.9,730.7 M1059.4,733.2 V731.4 M1059.4,733.2 H1057.6" stroke="#444" stroke-width="0.9" fill="none"/>
<path d="M1075,729.2 H1084" stroke="#333" stroke-width="0.9"/>
<rect x="1090" y="728" width="21" height="2.2" fill="#111"/><rect x="1111" y="728.6" width="77" height="1" fill="#d8d8dc"/>
<circle cx="1111" cy="729" r="5.6" fill="#fff" stroke="#111" stroke-width="2.2"/>
<path d="M1194.5,729 H1204 M1199.25,724.2 V733.8" stroke="#444" stroke-width="1.2"/>
<text x="1230" y="733" font-family="Liberation Sans" font-size="12.6" fill="#222" stroke="#222" stroke-width="0.25" text-anchor="middle" font-weight="400" >81%</text>
<path d="M1250.6,727.56 L1255.4,727.56 L1253,730.44 Z" fill="#888"/>
<path d="M1299,727 V723 H1303 M1308.5,723 H1312.5 V727 M1312.5,731 V735 H1308.5 M1303,735 H1299 V731" stroke="#444" stroke-width="1.3" fill="none"/>
<rect x="1334.5" y="722.8" width="13.5" height="12.5" rx="1" fill="none" stroke="#444" stroke-width="1.2"/><path d="M1337,729 H1345.5 M1337,727 V731 M1345.5,727 V731" stroke="#444" stroke-width="1.1"/>
</svg>
</body></html>
